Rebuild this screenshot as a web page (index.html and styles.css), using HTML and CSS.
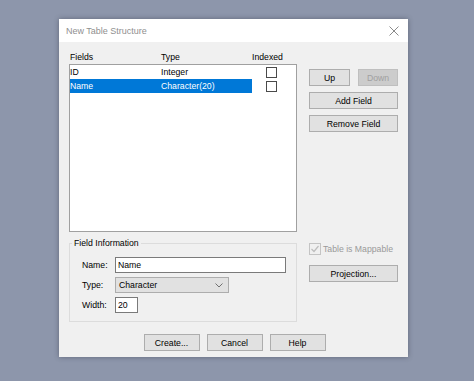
FILE: index.html
```html
<!DOCTYPE html>
<html>
<head>
<meta charset="utf-8">
<link rel="stylesheet" href="styles.css">
</head>
<body>
<div class="dialog">
  <div class="titlebar">
    <span class="title">New Table Structure</span>
    <svg class="close" width="10" height="10" viewBox="0 0 10 10"><path d="M0.5 0.5 L9.5 9.5 M9.5 0.5 L0.5 9.5" stroke="#8a8a8a" stroke-width="1" fill="none"/></svg>
  </div>
  <div class="content">
    <div class="main">
      <div class="left">
        <div class="cols head">
          <span>Fields</span><span>Type</span><span class="idx-head">Indexed</span>
        </div>
        <div class="list">
          <div class="cols row">
            <span class="sel-part">ID</span><span class="sel-part">Integer</span><span class="idx"><span class="cb"></span></span>
          </div>
          <div class="cols row selected">
            <span class="sel-part">Name</span><span class="sel-part">Character(20)</span><span class="idx"><span class="cb"></span></span>
          </div>
        </div>
        <fieldset class="group">
          <legend>Field Information</legend>
          <div class="form">
            <div class="frow"><label>Name:</label><div class="input wide">Name</div></div>
            <div class="frow"><label>Type:</label><div class="select">Character<svg width="8" height="5" viewBox="0 0 8 5"><path d="M0.5 0.5 L4 4 L7.5 0.5" stroke="#707070" fill="none"/></svg></div></div>
            <div class="frow"><label>Width:</label><div class="input narrow">20</div></div>
          </div>
        </fieldset>
      </div>
      <div class="right">
        <div class="pair">
          <div class="btn up">Up</div>
          <div class="btn down disabled">Down</div>
        </div>
        <div class="btn full">Add Field</div>
        <div class="btn full">Remove Field</div>
        <div class="mappable">
          <span class="cb2"><svg width="10" height="10" viewBox="0 0 10 10"><path d="M1.5 5 L4 7.5 L8.5 2" stroke="#bdbdbd" stroke-width="1.2" fill="none"/></svg></span>
          <span>Table is Mappable</span>
        </div>
        <div class="btn full">Projection...</div>
      </div>
    </div>
    <div class="footer">
      <div class="btn foot">Create...</div>
      <div class="btn foot">Cancel</div>
      <div class="btn foot">Help</div>
    </div>
  </div>
</div>
</body>
</html>
```

FILE: styles.css
```css
html, body {
  margin: 0;
  padding: 0;
}
body {
  background: #8d96ab;
  width: 474px;
  height: 381px;
  overflow: hidden;
  font-family: "Liberation Sans", Arial, sans-serif;
  font-size: 8.7px;
  color: #000;
}
.dialog {
  margin: 19px 0 0 59px;
  width: 349px;
  height: 338px;
  background: #f0f0f0;
  box-shadow: 0 0 5px rgba(40, 45, 60, 0.45);
  display: flex;
  flex-direction: column;
}
.titlebar {
  height: 23px;
  background: #fff;
  display: flex;
  align-items: center;
  justify-content: space-between;
  padding: 0 9px 0 7px;
  flex: none;
}
.title {
  color: #8f8f8f;
  font-size: 9px;
}
.close {
  display: block;
}
.content {
  flex: 1;
  display: flex;
  flex-direction: column;
  padding: 8px 10px 6px 10px;
}
.main {
  display: flex;
  gap: 12px;
}
.left {
  width: 228px;
  display: flex;
  flex-direction: column;
}
.cols {
  display: grid;
  grid-template-columns: 91px 91px 1fr;
  align-items: center;
}
.head {
  height: 14px;
  padding-left: 1px;
}
.idx-head {
  padding-left: 0;
}
.list {
  height: 168px;
  box-sizing: border-box;
  background: #fff;
  border: 1px solid #a0a0a0;
}
.row {
  height: 14px;
}
.sel-part {
  height: 100%;
  display: flex;
  align-items: center;
}
.selected .sel-part {
  background: #0078d7;
  color: #fff;
}
.idx {
  display: flex;
  align-items: center;
  padding-left: 14px;
}
.cb {
  width: 9px;
  height: 9px;
  border: 1px solid #4a4a4a;
  background: #fff;
}
.group {
  margin: 5px 0 0 0;
  padding: 0;
  border: 1px solid #dcdcdc;
  min-width: 0;
}
.group legend {
  padding: 0 2px;
  margin-left: 2px;
  line-height: 12px;
}
.form {
  display: flex;
  flex-direction: column;
  gap: 4px;
  padding: 8px 0 8px 12px;
}
.frow {
  display: flex;
  align-items: center;
  height: 16px;
}
.frow label {
  width: 33px;
  color: #000;
}
.input {
  height: 16px;
  box-sizing: border-box;
  border: 1px solid #7a7a7a;
  background: #fff;
  padding-left: 2px;
  display: flex;
  align-items: center;
}
.wide {
  width: 171px;
}
.narrow {
  width: 23px;
}
.select {
  width: 114px;
  height: 16px;
  box-sizing: border-box;
  border: 1px solid #adadad;
  background: #e1e1e1;
  display: flex;
  align-items: center;
  justify-content: space-between;
  padding: 0 5px 0 3px;
}
.select svg {
  display: block;
}
.right {
  width: 89px;
  display: flex;
  flex-direction: column;
  padding-top: 19px;
  gap: 6px;
}
.btn {
  height: 17px;
  box-sizing: border-box;
  border: 1px solid #adadad;
  background: #e1e1e1;
  display: flex;
  align-items: center;
  justify-content: center;
}
.pair {
  display: flex;
  gap: 8px;
}
.up {
  width: 41px;
}
.down {
  width: 40px;
}
.disabled {
  background: #cccccc;
  border-color: #bfbfbf;
  color: #a0a0a0;
}
.mappable {
  margin-top: 104px;
  height: 13px;
  display: flex;
  align-items: center;
  gap: 2px;
  color: #9a9a9a;
  margin-bottom: 4px;
}
.cb2 {
  width: 10px;
  height: 10px;
  border: 1px solid #c4c4c4;
  display: flex;
}
.footer {
  margin-top: auto;
  display: flex;
  justify-content: center;
  gap: 7px;
  padding-left: 2px;
}
.foot {
  width: 56px;
}
```
